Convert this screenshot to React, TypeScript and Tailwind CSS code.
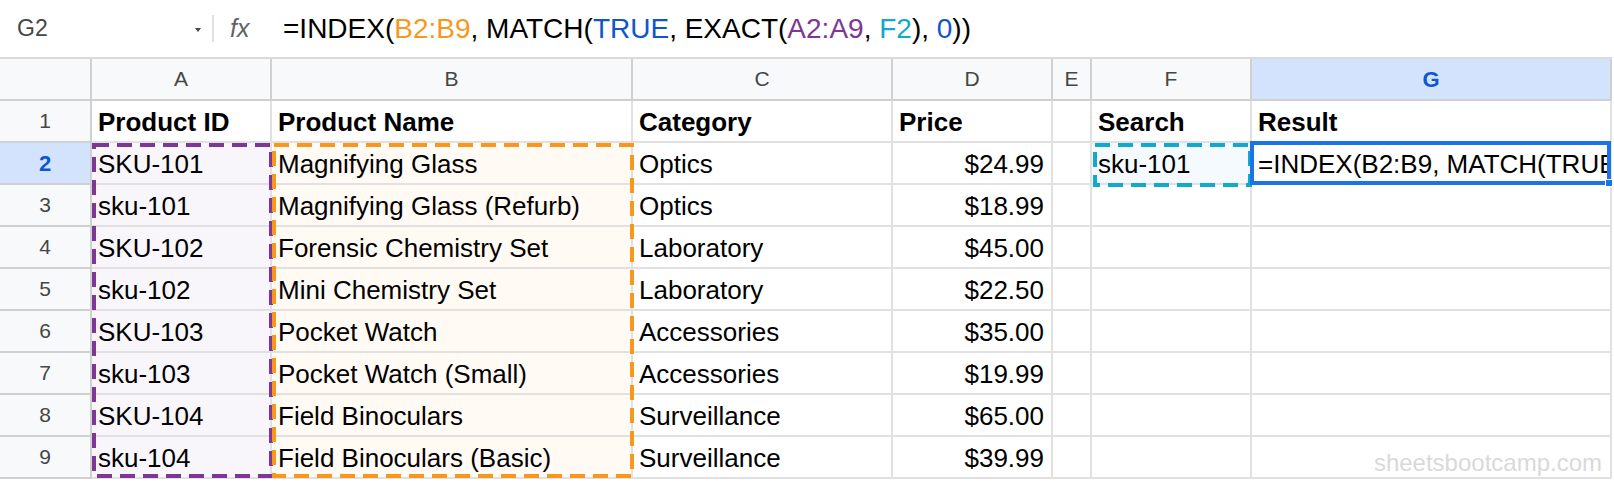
import React from "react";

const FONT = "font-['Liberation_Sans',Arial,sans-serif]";

type Row = [string, string, string, string];

const rows: Row[] = [
  ["SKU-101", "Magnifying Glass", "Optics", "$24.99"],
  ["sku-101", "Magnifying Glass (Refurb)", "Optics", "$18.99"],
  ["SKU-102", "Forensic Chemistry Set", "Laboratory", "$45.00"],
  ["sku-102", "Mini Chemistry Set", "Laboratory", "$22.50"],
  ["SKU-103", "Pocket Watch", "Accessories", "$35.00"],
  ["sku-103", "Pocket Watch (Small)", "Accessories", "$19.99"],
  ["SKU-104", "Field Binoculars", "Surveillance", "$65.00"],
  ["sku-104", "Field Binoculars (Basic)", "Surveillance", "$39.99"],
];

const letters = ["A", "B", "C", "D", "E", "F", "G"];

function Cell({
  children,
  bold,
  right,
  bg = "bg-white",
}: {
  children?: React.ReactNode;
  bold?: boolean;
  right?: boolean;
  bg?: string;
}) {
  return (
    <div
      className={`h-[42px] border-r-2 border-b-2 border-[#e1e1e1] flex items-end pb-[4px] overflow-hidden whitespace-nowrap text-[26px] leading-[30px] text-black ${bg} ${
        right ? "justify-end pr-[7px]" : "pl-[6px]"
      } ${bold ? "font-bold" : ""}`}
    >
      {children}
    </div>
  );
}

function RowHead({ n, active }: { n: number; active?: boolean }) {
  return (
    <div
      className={`h-[42px] border-r-2 border-b-2 border-[#d0d0d0] flex items-center justify-center text-[21px] ${
        active ? "bg-[#d3e3fd] text-[#0b57d0] font-bold text-[22px]" : "bg-[#f8f9fa] text-[#444746]"
      }`}
    >
      {n}
    </div>
  );
}

// dashed marquee drawn over a copied / referenced range
function Dashed({ w, h, color, className }: { w: number; h: number; color: string; className: string }) {
  return (
    <svg className={`absolute pointer-events-none ${className}`} width={w} height={h}>
      <rect
        x={2}
        y={2}
        width={w - 4}
        height={h - 4}
        fill="none"
        stroke={color}
        strokeWidth={4}
        strokeDasharray="15 8"
      />
    </svg>
  );
}

export default function App() {
  return (
    <div className={`w-[1614px] h-[484px] bg-white overflow-hidden ${FONT}`}>
      {/* Formula bar */}
      <div className="h-[57px] flex items-center whitespace-nowrap">
        <span className="w-[195px] pl-[17px] text-[23px] text-[#444746]">G2</span>
        <svg width="6" height="4" viewBox="0 0 6 4" className="mt-[2px]">
          <path d="M0 0 L6 0 L3 4 Z" fill="#444746" />
        </svg>
        <div className="ml-[11px] w-[2px] h-[27px] bg-[#e0e0e0]" />
        <span className="ml-[16px] w-[20px] text-[25px] italic text-[#5f6368]">fx</span>
        <span className="ml-[33px] text-[28px] text-black">
          =INDEX(<span className="text-[#f7981d]">B2:B9</span>, MATCH(
          <span className="text-[#1155cc]">TRUE</span>, EXACT(
          <span className="text-[#7e3794]">A2:A9</span>, <span className="text-[#11a9cc]">F2</span>),{" "}
          <span className="text-[#1155cc]">0</span>))
        </span>
      </div>

      {/* Grid */}
      <div className="relative border-t-2 border-[#dadada] w-[1612px] grid grid-cols-[92px_180px_361px_260px_160px_39px_160px_360px]">
        {/* column headers */}
        <div className="h-[42px] bg-[#f8f9fa] border-r-2 border-b-2 border-[#d0d0d0]" />
        {letters.map((l) => (
          <div
            key={l}
            className={`h-[42px] border-r-2 border-b-2 border-[#d0d0d0] flex items-center justify-center ${
              l === "G" ? "bg-[#d3e3fd] text-[#0b57d0] font-bold text-[22px]" : "bg-[#f8f9fa] text-[#444746] text-[21px]"
            }`}
          >
            {l}
          </div>
        ))}

        {/* row 1 */}
        <RowHead n={1} />
        <Cell bold>Product ID</Cell>
        <Cell bold>Product Name</Cell>
        <Cell bold>Category</Cell>
        <Cell bold>Price</Cell>
        <Cell />
        <Cell bold>Search</Cell>
        <Cell bold>Result</Cell>

        {rows.map((r, i) => (
          <React.Fragment key={i}>
            <RowHead n={i + 2} active={i === 0} />
            <Cell bg="bg-[#f9f6fb]">{r[0]}</Cell>
            <Cell bg="bg-[#fffaf4]">{r[1]}</Cell>
            <Cell>{r[2]}</Cell>
            <Cell right>{r[3]}</Cell>
            <Cell />
            {i === 0 ? <Cell bg="bg-[#f4fafd]">sku-101</Cell> : <Cell />}
            {i === 0 ? <Cell>=INDEX(B2:B9, MATCH(TRUE, EXACT(A2:A9, F2), 0))</Cell> : <Cell />}
          </React.Fragment>
        ))}

        {/* range highlights */}
        <Dashed w={181} h={335} color="#7e3794" className="left-[92px] top-[84px]" />
        <Dashed w={362} h={335} color="#f7981d" className="left-[272px] top-[84px]" />
        <Dashed w={159} h={44} color="#11a9cc" className="left-[1093px] top-[84px]" />
        <div className="absolute left-[1250px] top-[82px] w-[361px] h-[44px] border-4 border-[#1a73e8] pointer-events-none">
          <div className="absolute -right-[6px] -bottom-[6px] w-[8px] h-[8px] bg-[#1a73e8] border border-white" />
        </div>

        {/* watermark */}
        <div className="absolute right-[10px] top-[386px] text-[24px] text-[#d9d9d9] pointer-events-none">
          sheetsbootcamp.com
        </div>
      </div>
    </div>
  );
}
